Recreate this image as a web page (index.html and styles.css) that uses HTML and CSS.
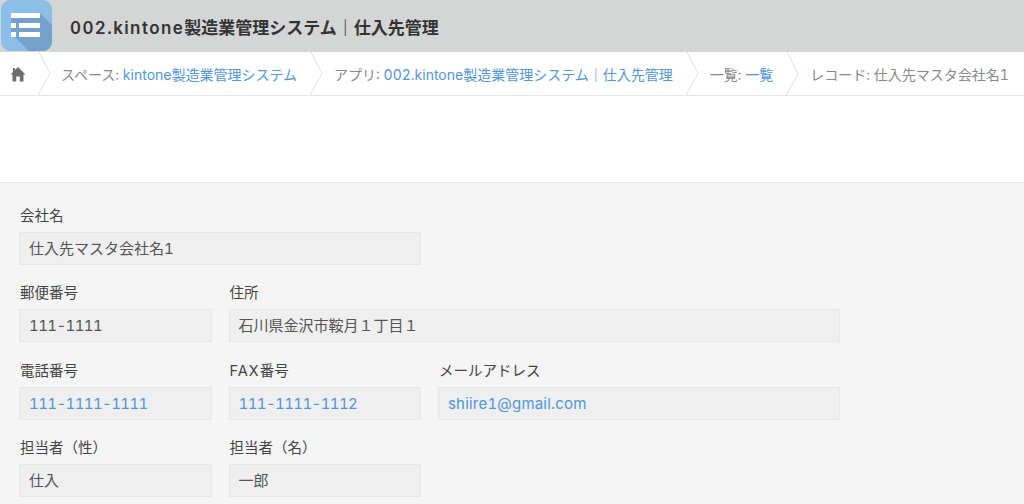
FILE: index.html
```html
<!DOCTYPE html>
<html lang="ja">
<head>
<meta charset="utf-8">
<title>仕入先管理</title>
<link rel="stylesheet" href="styles.css">
</head>
<body>
<header class="app-header">
  <svg class="app-icon" width="52" height="52" viewBox="0 0 52 52">
    <defs><clipPath id="c"><rect x="1" y="0" width="51" height="51" rx="9"/></clipPath></defs>
    <g clip-path="url(#c)">
      <rect x="1" y="0" width="51" height="51" fill="#8bbfe8"/>
      <path d="M40 13L52 25V52H30L11 33V13Z" fill="#73a3cd"/>
    </g>
    <path d="M11 13h29v5H11zM11 23h5v5H11zM19 23h21v5H19zM11 32h5v5H11zM19 32h21v5H19z" fill="#fff"/>
  </svg>
  <h1 class="app-title"><span class="wide-latin">002.kintone</span>製造業管理システム｜仕入先管理</h1>
</header>
<nav class="crumbs">
  <svg class="home" width="16" height="16" viewBox="0 0 16 16"><path d="M8 1L15.500 8.500H13.500V15.500H9.800V10.500H6.200V15.500H2.500V8.500H.5L3 6V2H5V4Z" fill="#6e6e6e"/></svg>
  <svg class="chev chev-first" width="13" height="44" viewBox="0 0 13 44"><path d="M1 0L12 21.500L0 43.500" fill="none" stroke="#dfdfdf"/></svg>
  <span class="crumb">スペース: <a>kintone製造業管理システム</a></span>
  <svg class="chev" width="13" height="44" viewBox="0 0 13 44"><path d="M1 0L12 21.500L0 43.500" fill="none" stroke="#dfdfdf"/></svg>
  <span class="crumb">アプリ: <a>002.kintone製造業管理システム｜仕入先管理</a></span>
  <svg class="chev" width="13" height="44" viewBox="0 0 13 44"><path d="M1 0L12 21.500L0 43.500" fill="none" stroke="#dfdfdf"/></svg>
  <span class="crumb">一覧: <a>一覧</a></span>
  <svg class="chev" width="13" height="44" viewBox="0 0 13 44"><path d="M1 0L12 21.500L0 43.500" fill="none" stroke="#dfdfdf"/></svg>
  <span class="crumb">レコード: 仕入先マスタ会社名1</span>
</nav>
<div class="toolbar"></div>
<main class="form">
  <div class="row">
    <div class="field w-full"><div class="label">会社名</div><div class="value">仕入先マスタ会社名1</div></div>
  </div>
  <div class="row">
    <div class="field w-small"><div class="label">郵便番号</div><div class="value num">111-1111</div></div>
    <div class="field w-addr"><div class="label">住所</div><div class="value">石川県金沢市鞍月１丁目１</div></div>
  </div>
  <div class="row">
    <div class="field w-small"><div class="label">電話番号</div><div class="value link num">111-1111-1111</div></div>
    <div class="field w-small"><div class="label"><span class="fax">FAX</span>番号</div><div class="value link num">111-1111-1112</div></div>
    <div class="field w-full"><div class="label">メールアドレス</div><div class="value link mail">shiire1@gmail.com</div></div>
  </div>
  <div class="row">
    <div class="field w-small"><div class="label">担当者（性）</div><div class="value">仕入</div></div>
    <div class="field w-small"><div class="label">担当者（名）</div><div class="value">一郎</div></div>
  </div>
</main>
</body>
</html>
```
FILE: styles.css
```css
* { box-sizing: border-box; }
html, body { margin: 0; height: 504px; overflow: hidden; }
body {
  background: #fff;
  font-family: "Inter", "Noto Sans CJK JP", sans-serif;
  font-variant-numeric: tabular-nums;
  color: #555;
}
.app-header {
  height: 52px;
  background: #d4d5d5;
  display: flex;
  align-items: center;
  gap: 18px;
}
.app-icon { display: block; flex: none; }
.app-title {
  margin: 0;
  font-size: 17px;
  font-weight: 600;
  color: #333;
  white-space: nowrap;
}
.wide-latin { letter-spacing: 1.4px; }
.crumbs {
  height: 44px;
  border-bottom: 1px solid #e6e6e6;
  display: flex;
  align-items: center;
  font-size: 14px;
  color: #888;
  white-space: nowrap;
}
.home { margin-left: 10px; flex: none; }
.chev { flex: none; margin: 0 11px 0 13px; display: block; }
.chev-first { margin: 0 10px 0 12px; }
.crumb a { color: #5096dc; }
.toolbar { height: 86px; }
.form {
  height: 322px;
  background: #f5f5f5;
  border-top: 1px solid #e8e8e8;
  padding: 23px 0 0 19px;
}
.row { display: flex; gap: 17px; height: 77.33px; }
.field { flex: none; }
.w-small { width: 192.5px; }
.w-full { width: 402px; }
.w-addr { width: 611.5px; }
.label {
  font-size: 14.5px;
  line-height: 20px;
  height: 26px;
  padding-left: 1px;
  color: #444;
  white-space: nowrap;
}
.fax { letter-spacing: 1px; }
.value {
  height: 33px;
  line-height: 31px;
  padding: 0 9px;
  background: #efefef;
  border: 1px solid #e6e6e6;
  font-size: 15px;
  color: #555;
  white-space: nowrap;
}
.link { color: #5096dc; }
.num { letter-spacing: -0.6px; }
.mail { letter-spacing: 0.2px; }
```
